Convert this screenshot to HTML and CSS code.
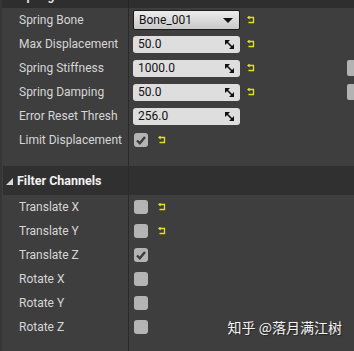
FILE: index.html
```html
<!DOCTYPE html>
<html>
<head>
	<meta charset="UTF-8">
	<title>Spring Controller</title>
<link rel="stylesheet" href="styles.css">
</head>
<body>
<div class="panel">
	<div class="topbar">
		<div class="topcell"><span class="toptext">Spring Controller</span></div>
		<div class="topval"></div>
	</div>

	<div class="row">
		<div class="label">Spring Bone</div>
		<div class="value">
			<div class="combo">Bone_001<span class="caret"></span></div>
			<svg class="reset" width="8" height="8" viewBox="0 0 8 8"><path d="M2 1.5 H6.5 V6.5 H1.5" stroke="#e4e41e" stroke-width="1.3" fill="none"/><path d="M0 1.5 L2.6 -0.6 L2.6 3.6 Z" fill="#e4e41e"/></svg>
		</div>
	</div>
	<div class="row">
		<div class="label">Max Displacement</div>
		<div class="value">
			<div class="field">50.0<svg class="spin" width="9" height="9" viewBox="0 0 9 9"><path d="M0 0 L5 0 L0 5 Z M9 9 L4 9 L9 4 Z" fill="#111"/><path d="M1 1 L8 8" stroke="#111" stroke-width="1.6"/></svg></div>
			<svg class="reset" width="8" height="8" viewBox="0 0 8 8"><path d="M2 1.5 H6.5 V6.5 H1.5" stroke="#e4e41e" stroke-width="1.3" fill="none"/><path d="M0 1.5 L2.6 -0.6 L2.6 3.6 Z" fill="#e4e41e"/></svg>
		</div>
	</div>
	<div class="row">
		<div class="label">Spring Stiffness</div>
		<div class="value">
			<div class="field">1000.0<svg class="spin" width="9" height="9" viewBox="0 0 9 9"><path d="M0 0 L5 0 L0 5 Z M9 9 L4 9 L9 4 Z" fill="#111"/><path d="M1 1 L8 8" stroke="#111" stroke-width="1.6"/></svg></div>
			<svg class="reset" width="8" height="8" viewBox="0 0 8 8"><path d="M2 1.5 H6.5 V6.5 H1.5" stroke="#e4e41e" stroke-width="1.3" fill="none"/><path d="M0 1.5 L2.6 -0.6 L2.6 3.6 Z" fill="#e4e41e"/></svg>
			<div class="slider"></div>
		</div>
	</div>
	<div class="row">
		<div class="label">Spring Damping</div>
		<div class="value">
			<div class="field">50.0<svg class="spin" width="9" height="9" viewBox="0 0 9 9"><path d="M0 0 L5 0 L0 5 Z M9 9 L4 9 L9 4 Z" fill="#111"/><path d="M1 1 L8 8" stroke="#111" stroke-width="1.6"/></svg></div>
			<svg class="reset" width="8" height="8" viewBox="0 0 8 8"><path d="M2 1.5 H6.5 V6.5 H1.5" stroke="#e4e41e" stroke-width="1.3" fill="none"/><path d="M0 1.5 L2.6 -0.6 L2.6 3.6 Z" fill="#e4e41e"/></svg>
			<div class="slider"></div>
		</div>
	</div>
	<div class="row">
		<div class="label">Error Reset Thresh</div>
		<div class="value">
			<div class="field">256.0<svg class="spin" width="9" height="9" viewBox="0 0 9 9"><path d="M0 0 L5 0 L0 5 Z M9 9 L4 9 L9 4 Z" fill="#111"/><path d="M1 1 L8 8" stroke="#111" stroke-width="1.6"/></svg></div>
		</div>
	</div>
	<div class="row">
		<div class="label">Limit Displacement</div>
		<div class="value">
			<div class="check"><svg width="14" height="14" viewBox="0 0 14 14"><path d="M3 7.5 L5.8 10.3 L11 4" stroke="#3c3c3c" stroke-width="2.4" fill="none"/></svg></div>
			<svg class="reset small" width="8" height="8" viewBox="0 0 8 8"><path d="M2 1.5 H6.5 V6.5 H1.5" stroke="#e4e41e" stroke-width="1.3" fill="none"/><path d="M0 1.5 L2.6 -0.6 L2.6 3.6 Z" fill="#e4e41e"/></svg>
		</div>
	</div>

	<div class="gap">
		<div class="label"></div>
	</div>

	<div class="section">
		<div class="sectitle"><span class="tri"></span>Filter Channels</div>
		<div class="secval"></div>
	</div>

	<div class="row">
		<div class="label">Translate X</div>
		<div class="value">
			<div class="check"></div>
			<svg class="reset small" width="8" height="8" viewBox="0 0 8 8"><path d="M2 1.5 H6.5 V6.5 H1.5" stroke="#e4e41e" stroke-width="1.3" fill="none"/><path d="M0 1.5 L2.6 -0.6 L2.6 3.6 Z" fill="#e4e41e"/></svg>
		</div>
	</div>
	<div class="row">
		<div class="label">Translate Y</div>
		<div class="value">
			<div class="check"></div>
			<svg class="reset small" width="8" height="8" viewBox="0 0 8 8"><path d="M2 1.5 H6.5 V6.5 H1.5" stroke="#e4e41e" stroke-width="1.3" fill="none"/><path d="M0 1.5 L2.6 -0.6 L2.6 3.6 Z" fill="#e4e41e"/></svg>
		</div>
	</div>
	<div class="row">
		<div class="label">Translate Z</div>
		<div class="value">
			<div class="check"><svg width="14" height="14" viewBox="0 0 14 14"><path d="M3 7.5 L5.8 10.3 L11 4" stroke="#3c3c3c" stroke-width="2.4" fill="none"/></svg></div>
		</div>
	</div>
	<div class="row">
		<div class="label">Rotate X</div>
		<div class="value"><div class="check"></div></div>
	</div>
	<div class="row">
		<div class="label">Rotate Y</div>
		<div class="value"><div class="check"></div></div>
	</div>
	<div class="row">
		<div class="label">Rotate Z</div>
		<div class="value"><div class="check"></div></div>
	</div>
	<div class="gap bottom">
		<div class="label"></div>
	</div>

	<div class="mark">知乎 @落月满江树</div>
</div>
</body>
</html>
```

FILE: styles.css
```css
html, body {
	margin: 0;
	padding: 0;
	background-color: #3e3e3e;
	overflow: hidden;
}
.panel {
	position: relative;
	width: 354px;
	height: 351px;
	overflow: hidden;
	font-family: Roboto, "Noto Sans", sans-serif;
	font-size: 12px;
	color: #d6d6d6;
	border-left: 2px solid #363636;
	box-sizing: border-box;
}
.topbar {
	display: flex;
	height: 8px;
	background-color: #2e2e2e;
	overflow: hidden;
}
.topcell {
	position: relative;
	width: 127px;
	border-right: 1px solid #262626;
	box-sizing: border-box;
}
.toptext {
	position: absolute;
	left: 17px;
	bottom: 6px;
	font-weight: bold;
	font-size: 12px;
	line-height: 12px;
	color: #e0e0e0;
}
.row {
	display: flex;
	height: 24px;
	align-items: stretch;
}
.label {
	width: 127px;
	flex: none;
	border-right: 1px solid #2a2a2a;
	box-sizing: border-box;
	padding-left: 17px;
	display: flex;
	align-items: center;
}
.value {
	flex: 1;
	display: flex;
	align-items: center;
	padding-left: 4px;
}
.combo {
	position: relative;
	width: 107px;
	height: 20px;
	box-sizing: border-box;
	border: 1px solid #1c1c1c;
	border-radius: 2px;
	background: linear-gradient(#ececec, #c9c9c9);
	color: #111;
	font-size: 12px;
	line-height: 18px;
	padding-left: 5px;
}
.caret {
	position: absolute;
	right: 6px;
	top: 7px;
	border-left: 5px solid transparent;
	border-right: 5px solid transparent;
	border-top: 5px solid #111;
}
.field {
	position: relative;
	width: 107px;
	height: 17px;
	box-sizing: border-box;
	border-radius: 3px;
	background-color: #dedede;
	color: #111;
	font-size: 12px;
	line-height: 17px;
	padding-left: 5px;
}
.spin {
	position: absolute;
	right: 6px;
	top: 4px;
}
.reset {
	margin-left: 7px;
	flex: none;
}
.reset.small {
	margin-left: 10px;
}
.slider {
	margin-left: auto;
	width: 7px;
	height: 16px;
	border-radius: 2px 0 0 2px;
	background-color: #b3b3b3;
}
.check {
	width: 14px;
	height: 14px;
	margin-left: 1px;
	border-radius: 3px;
	background-color: #b4b4b4;
	flex: none;
}
.check svg {
	display: block;
}
.gap {
	display: flex;
	height: 14px;
}
.gap.bottom {
	height: 30px;
}
.section {
	display: flex;
	height: 29px;
	margin-left: 1px;
	background-color: #303030;
}
.sectitle {
	width: 126px;
	border-right: 1px solid #2a2a2a;
	box-sizing: border-box;
	display: flex;
	align-items: center;
	padding-left: 3px;
	font-weight: bold;
	font-size: 12.5px;
	color: #f2f2f2;
}
.tri {
	width: 0;
	height: 0;
	border-left: 7px solid transparent;
	border-bottom: 7px solid #d8d8d8;
	margin-right: 4px;
	margin-top: 1px;
}
.mark {
	position: absolute;
	right: 12px;
	bottom: 14px;
	font-family: "Noto Sans CJK SC", sans-serif;
	font-size: 14px;
	color: #f4f4f4;
	text-shadow: 1px 1px 1px #222;
}
```
